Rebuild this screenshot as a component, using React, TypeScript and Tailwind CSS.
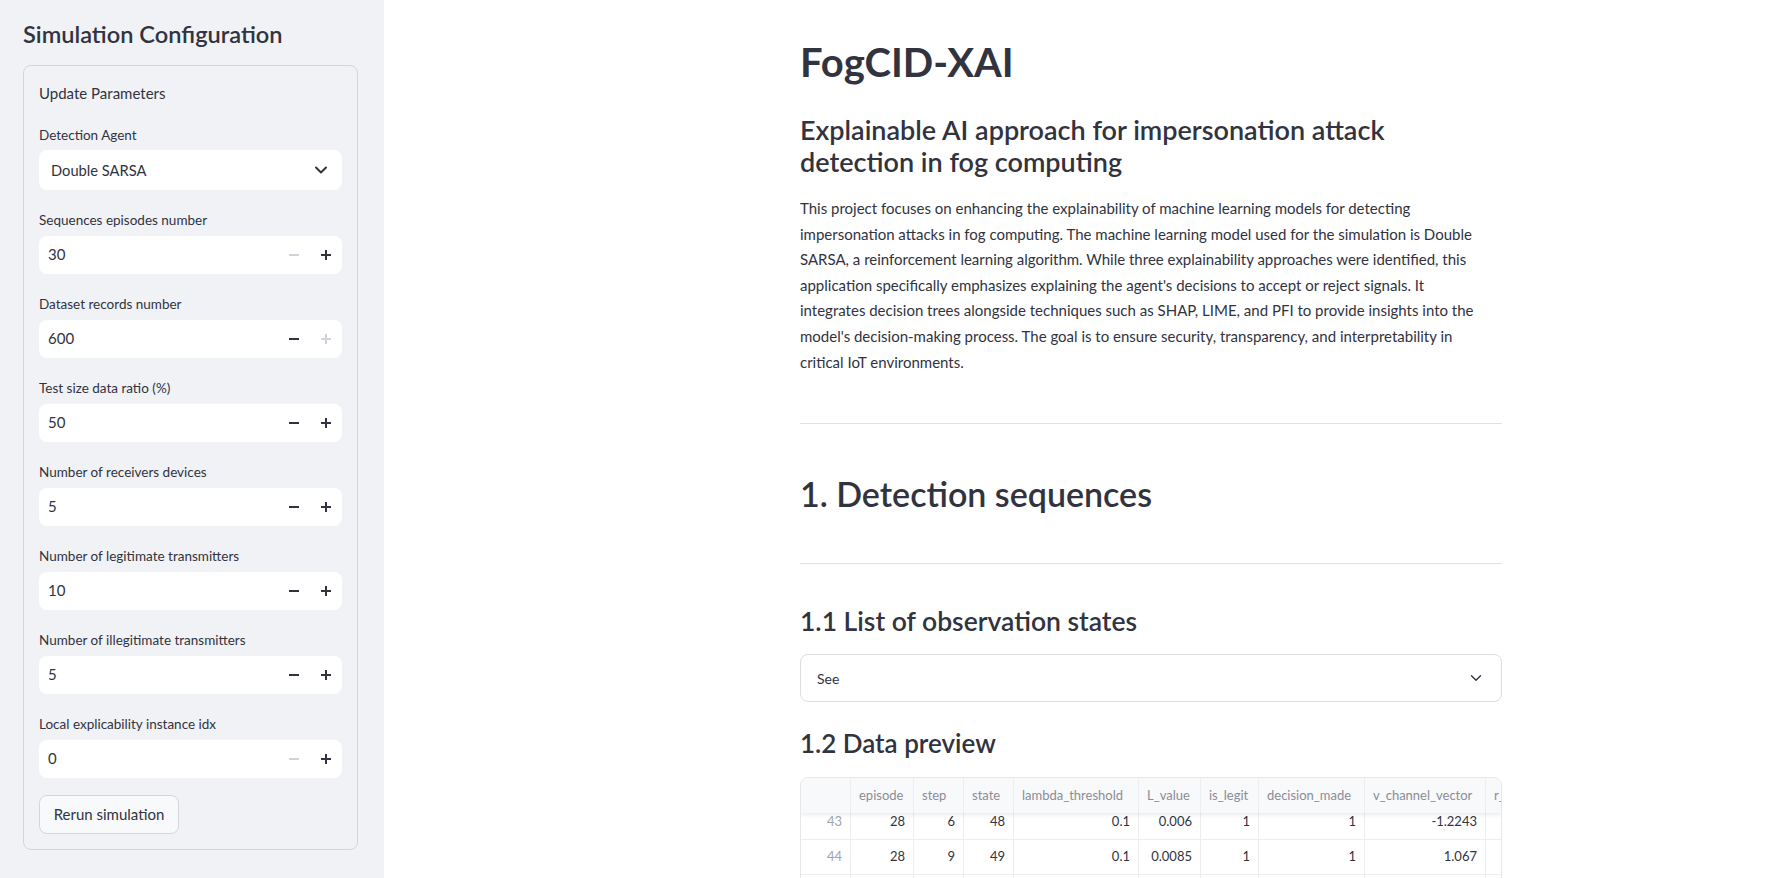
import React from 'react';

const ink = 'text-[#31333f]';

const Minus = ({ disabled }: { disabled?: boolean }) => (
  <svg width="10" height="10" viewBox="0 0 10 10" className={disabled ? 'text-[#d0d4dc]' : 'text-[#31333f]'}>
    <path d="M1 5h8" stroke="currentColor" strokeWidth="2" strokeLinecap="square" />
  </svg>
);

const Plus = ({ disabled }: { disabled?: boolean }) => (
  <svg width="10" height="10" viewBox="0 0 10 10" className={disabled ? 'text-[#d0d4dc]' : 'text-[#31333f]'}>
    <path d="M1 5h8M5 1v8" stroke="currentColor" strokeWidth="2" strokeLinecap="square" />
  </svg>
);

const Chevron = ({ size, stroke }: { size: number; stroke: number }) => (
  <svg width={size} height={size} viewBox="0 0 24 24" fill="none">
    <path d="M6 9l6 6 6-6" stroke="#31333f" strokeWidth={stroke} strokeLinecap="round" strokeLinejoin="round" />
  </svg>
);

interface NumberFieldProps {
  label: string;
  value: string;
  minusOff?: boolean;
  plusOff?: boolean;
}

const NumberField: React.FC<NumberFieldProps> = ({ label, value, minusOff, plusOff }) => (
  <div className="mt-[18px]">
    <div className="h-[24px] leading-[24px] text-[13.5px] mb-[4px]">{label}</div>
    <div className="h-[38px] bg-white rounded-lg flex items-center">
      <span className="flex-1 pl-[9px] text-[15px]">{value}</span>
      <span className="w-[32px] h-full flex items-center justify-center">
        <Minus disabled={minusOff} />
      </span>
      <span className="w-[32px] h-full flex items-center justify-center">
        <Plus disabled={plusOff} />
      </span>
    </div>
  </div>
);

const fields: NumberFieldProps[] = [
  { label: 'Sequences episodes number', value: '30', minusOff: true },
  { label: 'Dataset records number', value: '600', plusOff: true },
  { label: 'Test size data ratio (%)', value: '50' },
  { label: 'Number of receivers devices', value: '5' },
  { label: 'Number of legitimate transmitters', value: '10' },
  { label: 'Number of illegitimate transmitters', value: '5' },
  { label: 'Local explicability instance idx', value: '0', minusOff: true },
];

const paragraph = [
  'This project focuses on enhancing the explainability of machine learning models for detecting',
  'impersonation attacks in fog computing. The machine learning model used for the simulation is Double',
  'SARSA, a reinforcement learning algorithm. While three explainability approaches were identified, this',
  "application specifically emphasizes explaining the agent's decisions to accept or reject signals. It",
  'integrates decision trees alongside techniques such as SHAP, LIME, and PFI to provide insights into the',
  "model's decision-making process. The goal is to ensure security, transparency, and interpretability in",
  'critical IoT environments.',
];

// column widths include the 1px right border
const columns = [
  { name: '', w: 'w-[50px]' },
  { name: 'episode', w: 'w-[63px]' },
  { name: 'step', w: 'w-[50px]' },
  { name: 'state', w: 'w-[50px]' },
  { name: 'lambda_threshold', w: 'w-[125px]' },
  { name: 'L_value', w: 'w-[62px]' },
  { name: 'is_legit', w: 'w-[58px]' },
  { name: 'decision_made', w: 'w-[106px]' },
  { name: 'v_channel_vector', w: 'w-[121px]' },
  { name: 'r_', w: 'w-[110px]' },
];

// last column sits past the table's visible edge; third row is only a sliver
const rows = [
  ['43', '28', '6', '48', '0.1', '0.006', '1', '1', '-1.2243', ''],
  ['44', '28', '9', '49', '0.1', '0.0085', '1', '1', '1.067', ''],
  ['', '', '', '', '', '', '', '', '', ''],
];

const DataPreview = () => (
  <div className="mt-[18px] rounded-lg border border-[#e6e7eb] overflow-hidden text-[13px]">
    <div className="relative z-10 flex h-[35px] bg-[#f8f9fb] shadow-[0_2px_4px_rgba(0,0,0,0.08)]">
      {columns.map((c, i) => (
        <div
          key={i}
          className={`${c.w} shrink-0 border-r border-[#eceef1] px-[8px] flex items-center whitespace-nowrap text-[#8a8d96]`}
        >
          {c.name}
        </div>
      ))}
    </div>
    <div className="-mt-[8px]">
      {rows.map((r, ri) => (
        <div key={ri} className="flex h-[35px] border-b border-[#eceef1]">
          {r.map((v, ci) => (
            <div
              key={ci}
              className={`${columns[ci].w} shrink-0 border-r border-[#eceef1] px-[8px] flex items-center justify-end whitespace-nowrap ${
                ci === 0 ? 'text-[#a0a3ab]' : ink
              }`}
            >
              {v}
            </div>
          ))}
        </div>
      ))}
    </div>
  </div>
);

export default function App() {
  return (
    <div className={`flex h-screen w-full overflow-hidden font-['Lato','Noto_Sans',sans-serif] ${ink}`}>
      <aside className="w-[384px] shrink-0 h-full bg-[#f0f2f6] px-[23px]">
        <h2 className="pt-[20px] text-[23.6px] leading-[28px] font-semibold">Simulation Configuration</h2>
        <div className="mt-[17px] w-[335px] rounded-lg border border-[#d5d6da] p-[15px]">
          <div className="text-[15px] leading-[25.6px]">Update Parameters</div>
          <div className="mt-[16px]">
            <div className="h-[24px] leading-[24px] text-[13.5px] mb-[3px]">Detection Agent</div>
            <div className="h-[40px] bg-white rounded-lg flex items-center justify-between pl-[12px] pr-[11px]">
              <span className="text-[14.7px]">Double SARSA</span>
              <Chevron size={20} stroke={2.4} />
            </div>
          </div>
          {fields.map((f) => (
            <NumberField key={f.label} {...f} />
          ))}
          <button className="mt-[17px] h-[39px] w-[140px] rounded-lg border border-[#d5d6da] bg-[#f8f9fb] text-[15px]">
            Rerun simulation
          </button>
        </div>
      </aside>

      <main className="flex-1 h-full bg-white pl-[416px] pt-[38px]">
        <div className="w-[702px]">
          <h1 className="text-[40px] leading-[48px] font-bold">FogCID-XAI</h1>
          <h3 className="mt-[28px] text-[27px] leading-[32px] font-semibold">
            Explainable AI approach for impersonation attack
            <br />
            detection in fog computing
          </h3>
          <p className="mt-[18px] text-[15px] leading-[25.6px]">
            {paragraph.map((line, i) => (
              <span key={i} className="block whitespace-nowrap">
                {line}
              </span>
            ))}
          </p>
          <hr className="mt-[48px] border-t border-[#e0e1e4]" />
          <h2 className="mt-[50px] text-[34px] leading-[40px] font-semibold">1. Detection sequences</h2>
          <hr className="mt-[49px] border-t border-[#e0e1e4]" />
          <h3 className="mt-[41px] text-[26.5px] leading-[32px] font-semibold">1.1 List of observation states</h3>
          <div className="mt-[17px] h-[48px] rounded-lg border border-[#dcdde1] flex items-center justify-between pl-[16px] pr-[16px]">
            <span className="text-[14px]">See</span>
            <Chevron size={18} stroke={1.8} />
          </div>
          <h3 className="mt-[25px] text-[26px] leading-[32px] font-semibold">1.2 Data preview</h3>
          <DataPreview />
        </div>
      </main>
    </div>
  );
}
